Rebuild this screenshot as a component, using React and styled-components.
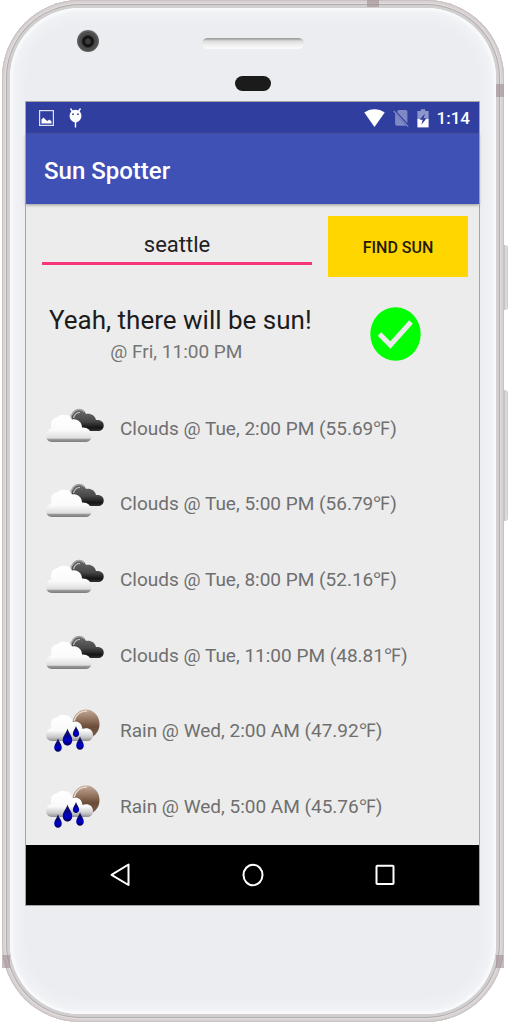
import React, { useState } from "react";
import styled, { createGlobalStyle } from "styled-components";

const GlobalStyle = createGlobalStyle`
  *, *::before, *::after { box-sizing: border-box; }
  body { margin: 0; background: #fff; font-family: Roboto, "Liberation Sans", sans-serif; }
  button, input { font: inherit; }
`;

/* ---------- device ---------- */

const Phone = styled.div`
  position: relative;
  margin: 0 4px 0 2px;
  padding: 8px;
  border-radius: 78px;
  background: #d2cfd0;
  box-shadow:
    inset 0 0 0 1px #c9c2c2,
    inset 0 0 0 3px #d8d2d2,
    inset 0 0 0 4px #e2dddd,
    inset 0 0 0 5px #b0adae;
`;

const Face = styled.div`
  padding: 0 16px 108px 15px;
  border-radius: 70px;
  background: #ecedf1;
  box-shadow: inset 0 0 4px 1px #fff, inset 0 0 16px 4px #f5f8fa;
`;

const Band = styled.span`
  position: absolute;
  background: #a08e92;
  opacity: 0.6;
  width: ${(p) => (p.$top ? "12px" : "8px")};
  height: ${(p) => (p.$top ? "7px" : "13px")};
  ${(p) => p.$place}
`;

const SideKey = styled.span`
  position: absolute;
  right: -4px;
  top: ${(p) => p.$from}px;
  width: 4px;
  height: ${(p) => p.$length}px;
  border-radius: 0 3px 3px 0;
  background: linear-gradient(90deg, #bcbaba, #e2e2e0 50%, #c9c8c7);
`;

const Forehead = styled.header`
  display: grid;
  grid-template-columns: 1fr auto 1fr;
  align-items: start;
  height: 93px;
  padding-top: 22px;
`;

const Camera = styled.span`
  width: 22px;
  height: 22px;
  margin-left: 52px;
  border-radius: 50%;
  background: radial-gradient(circle at 50% 52%, #3c3c3c 0 2px, #111 4px 5px, #4c4c4c 7px 9px, #6b6b6b 11px);
`;

const Center = styled.div`
  display: flex;
  flex-direction: column;
  align-items: center;
  gap: 27px;
  padding-top: 8px;
`;

const Speaker = styled.span`
  width: 102px;
  height: 11px;
  border-radius: 6px;
  background: linear-gradient(#9b9b9b 0, #a5a5a5 1px, #dcdcdc 3px, #f0f0f0 7px, #fbfbfb);
`;

const Sensor = styled.span`
  width: 36px;
  height: 15px;
  border-radius: 8px;
  background: #1b1b1b;
`;

/* ---------- screen ---------- */

const Screen = styled.main`
  border: 1px solid #a3a5a6;
  background: #ececec;
`;

const StatusBar = styled.div`
  display: flex;
  align-items: center;
  justify-content: space-between;
  height: 32px;
  padding: 0 9px 0 13px;
  background: #303f9f;
  color: #fff;
`;

const StatusGroup = styled.div`
  display: flex;
  align-items: center;
  gap: ${(p) => p.$gap}px;
`;

const Clock = styled.time`
  font-size: 17px;
  font-weight: 500;
  line-height: 24px;
`;

const AppBar = styled.div`
  display: flex;
  align-items: center;
  height: 70px;
  padding: 3px 18px 0;
  background: #3f51b5;
  box-shadow: 0 1px 3px #96988c;
`;

const AppTitle = styled.h1`
  margin: 0;
  color: #fff;
  font-size: 24px;
  font-weight: 500;
  line-height: 32px;
`;

const SearchForm = styled.form`
  display: flex;
  align-items: stretch;
  gap: 16px;
  padding: 12px 11px 0 16px;
`;

const CityField = styled.label`
  display: flex;
  flex: 1;
  min-width: 0;
  padding-bottom: 12px;
`;

const CityInput = styled.input`
  width: 100%;
  padding: 12px 0 0;
  border: 0;
  border-bottom: 3px solid #f8357b;
  border-radius: 0;
  outline: 0;
  background: transparent;
  color: #212121;
  font-size: 22px;
  line-height: 28px;
  text-align: center;
`;

const FindButton = styled.button`
  width: 140px;
  height: 61px;
  padding: 2px 0 0;
  border: 0;
  background: #ffd600;
  color: #1f1b06;
  font-size: 16px;
  font-weight: 500;
  line-height: 24px;
`;

const Result = styled.section`
  display: flex;
  align-items: center;
  justify-content: space-between;
  height: 114px;
  padding: 0 58px 0 23px;
`;

const Verdict = styled.h2`
  margin: 0;
  color: #1c1c1c;
  font-size: 26px;
  font-weight: 400;
  line-height: 36px;
  white-space: nowrap;
`;

const When = styled.p`
  margin: 0 8px 0 0;
  color: #757575;
  font-size: 19px;
  line-height: 28px;
  text-align: center;
`;

const Forecast = styled.ul`
  display: grid;
  grid-auto-rows: 1fr;
  min-height: 454px;
  margin: 0;
  padding: 0;
  list-style: none;
`;

const ForecastRow = styled.li`
  display: flex;
  align-items: center;
  gap: 13px;
  padding-left: 19px;
  color: #6f6f6f;
  font-size: 19px;
  line-height: 28px;
  white-space: nowrap;
`;

const NavBar = styled.nav`
  display: flex;
  align-items: center;
  justify-content: space-between;
  height: 60px;
  padding: 0 70px;
  background: #000;
`;

const NavButton = styled.button`
  display: flex;
  align-items: center;
  justify-content: center;
  width: 48px;
  height: 48px;
  padding: 0;
  border: 0;
  background: none;
`;

/* ---------- drawings ---------- */

const PictureIcon = () => (
  <svg width="15" height="16" viewBox="0 0 15 16" aria-hidden="true">
    <rect x="0.6" y="0.6" width="13.8" height="14.8" fill="none" stroke="#dfe2f3" strokeWidth="1.2" />
    <path d="M2.5 13.5V9.5L4.5 7.5L7 10L8.5 11L10.5 9.5L12.5 11.5V13.5Z" fill="#fff" />
  </svg>
);

const DroidIcon = () => (
  <svg width="13" height="20" viewBox="0 0 13 20" aria-hidden="true">
    <path d="M1.5 0.5L3.5 3.5M11.5 0.5L9.5 3.5M6.5 12V19.5" stroke="#fff" strokeWidth="1.4" />
    <path d="M6.5 1.8C10 1.8 12.4 4.6 12.4 8C12.4 11.2 10 14 6.5 14.6C3 14 0.6 11.2 0.6 8C0.6 4.6 3 1.8 6.5 1.8Z" fill="#fff" />
    <circle cx="4" cy="6.2" r="0.9" fill="#303f9f" />
    <circle cx="9" cy="6.2" r="0.9" fill="#303f9f" />
  </svg>
);

const WifiIcon = () => (
  <svg width="21" height="18" viewBox="0 0 21 18" aria-hidden="true">
    <path d="M0.3 3.6C6 -1 15 -1 20.7 3.6L10.5 18Z" fill="#fff" />
  </svg>
);

const NoSimIcon = () => (
  <svg width="16" height="18" viewBox="0 0 16 18" aria-hidden="true">
    <path d="M5.3 1H13.2L14.4 2.2V14.3L4 3ZM2.1 4.2L13.3 16.8H3.4L2.1 15.6Z" fill="#7e88c4" />
    <path d="M0.8 2L15.2 17.6" stroke="#7e88c4" strokeWidth="1.3" />
  </svg>
);

const BatteryIcon = () => (
  <svg width="12" height="19" viewBox="0 0 12 19" aria-hidden="true">
    <path d="M3.8 0.3H8.2V2H11.6V10H0.4V2H3.8Z" fill="#8e97cb" />
    <path d="M0.4 10H11.6V18.4H0.4Z" fill="#fff" />
    <path d="M8 4.5L2.6 10.8H5.6L4.4 15.8L9.6 9.3H6.6Z" fill="#303f9f" />
  </svg>
);

const CheckIcon = () => (
  <svg width="51" height="54" viewBox="0 0 51 54" role="img" aria-label="Sunny">
    <ellipse cx="25.5" cy="27" rx="25.2" ry="26.8" fill="#00ff00" />
    <path d="M9.5 27L20.4 38L41 15" fill="none" stroke="#ececec" strokeWidth="5" />
  </svg>
);

const CloudsIcon = () => (
  <svg width="62" height="50" viewBox="0 0 62 50" role="img" aria-label="Clouds">
    <defs>
      <linearGradient id="cloudDark" x1="0" y1="0" x2="0" y2="1">
        <stop offset="0" stopColor="#6c6c6c" />
        <stop offset="0.55" stopColor="#484848" />
        <stop offset="0.85" stopColor="#151515" />
        <stop offset="1" stopColor="#333" />
      </linearGradient>
      <linearGradient id="cloudLight" x1="0" y1="0" x2="0" y2="1">
        <stop offset="0" stopColor="#fff" />
        <stop offset="0.55" stopColor="#fbfbfb" />
        <stop offset="0.86" stopColor="#dedede" />
        <stop offset="0.9" stopColor="#9a9a9a" />
        <stop offset="1" stopColor="#7c7c7c" />
      </linearGradient>
    </defs>
    <path d="M26 19C25 10 29 5 34 5C38 5 40 7.5 41 10C45 9 50 11 51 16C56 15.5 59 18 58.7 22C58.5 25 56 27 53 27H35Z" fill="url(#cloudDark)" />
    <path d="M25.500 15.500C26 9 30.500 5 35 5.500C37 5.700 38.500 6.500 39.500 8" fill="none" stroke="#a9a9a9" strokeWidth="1.500" />
    <path d="M28.500 14C29.500 10.500 32 8.500 35 8.500" fill="none" stroke="#c4c4c4" strokeWidth="1.200" />
    <path d="M7 38C3.5 38 1 35 1 32C1 28 3.500 25 6.500 24.500C5 19 7 13.500 12 13.500C14 11 17 10.500 20 11C24 11 26 13 27 15.500C32 14 37 18 37 23.500C42 23 46 26 46.500 31C47 35 44.500 38 41 38Z" fill="url(#cloudLight)" />
  </svg>
);

const Drop = ({ x, y, s }) => (
  <path
    transform={`translate(${x} ${y}) scale(${s})`}
    d="M0 -8C1 -4 4.5 -1 4.5 3C4.5 6 2.5 8 0 8C-2.5 8 -4.5 6 -4.5 3C-4.5 -1 -1 -4 0 -8Z"
    fill="url(#dropBlue)"
  />
);

const RainIcon = () => (
  <svg width="62" height="50" viewBox="0 0 62 50" role="img" aria-label="Rain">
    <defs>
      <linearGradient id="moonBrown" x1="0" y1="0" x2="0" y2="1">
        <stop offset="0" stopColor="#c5ab9a" />
        <stop offset="0.4" stopColor="#8a6c57" />
        <stop offset="0.6" stopColor="#694d39" />
        <stop offset="1" stopColor="#7c604c" />
      </linearGradient>
      <linearGradient id="rainCloud" x1="0" y1="0" x2="0" y2="1">
        <stop offset="0" stopColor="#fff" />
        <stop offset="0.6" stopColor="#fafafa" />
        <stop offset="0.85" stopColor="#c9c9c9" />
        <stop offset="1" stopColor="#8f8f8f" />
      </linearGradient>
      <linearGradient id="dropBlue" x1="0" y1="0" x2="0" y2="1">
        <stop offset="0" stopColor="#1a1a55" />
        <stop offset="0.4" stopColor="#06067c" />
        <stop offset="0.7" stopColor="#0000d0" />
        <stop offset="1" stopColor="#00004e" />
      </linearGradient>
    </defs>
    <ellipse cx="41" cy="18" rx="13.500" ry="14.500" fill="url(#moonBrown)" />
    <path d="M29 15C31 8 36 5 42 5" fill="none" stroke="#ead9cc" strokeWidth="1.5" />
    <path d="M7 35C3.500 35 1 32 1 29C1 25 3.500 22.500 6.500 22C5 16 7 11.500 12 11.500C14 9 17 8.500 19 9C23.500 9 26.500 12 27.500 16C32 14 37 17 37.500 23C43 21 48 24 48 29C48 33 45 35 42 35Z" fill="url(#rainCloud)" />
    <Drop x={22.5} y={31} s={1.05} />
    <Drop x={13} y={39} s={0.85} />
    <Drop x={31} y={25.5} s={0.7} />
    <Drop x={35} y={37} s={0.85} />
  </svg>
);

const BackIcon = () => (
  <svg width="20" height="24" viewBox="0 0 20 24" aria-hidden="true">
    <path d="M18.5 1.5V22L1.5 11.8Z" fill="none" stroke="#fff" strokeWidth="2" strokeLinejoin="round" />
  </svg>
);

const HomeIcon = () => (
  <svg width="22" height="24" viewBox="0 0 22 24" aria-hidden="true">
    <ellipse cx="11" cy="12" rx="9.5" ry="10.3" fill="none" stroke="#fff" strokeWidth="2" />
  </svg>
);

const RecentIcon = () => (
  <svg width="20" height="22" viewBox="0 0 20 22" aria-hidden="true">
    <rect x="1.5" y="1.8" width="17" height="18.2" rx="0.8" fill="none" stroke="#fff" strokeWidth="2" />
  </svg>
);

/* ---------- page ---------- */

const forecast = [
  { sky: "Clouds", time: "Tue, 2:00 PM", temp: "55.69" },
  { sky: "Clouds", time: "Tue, 5:00 PM", temp: "56.79" },
  { sky: "Clouds", time: "Tue, 8:00 PM", temp: "52.16" },
  { sky: "Clouds", time: "Tue, 11:00 PM", temp: "48.81" },
  { sky: "Rain", time: "Wed, 2:00 AM", temp: "47.92" },
  { sky: "Rain", time: "Wed, 5:00 AM", temp: "45.76" },
];

export default function App() {
  const [city, setCity] = useState("seattle");

  return (
    <>
      <GlobalStyle />
      <Phone>
        <SideKey $from={245} $length={65} />
        <SideKey $from={390} $length={131} />
        <Face>
          <Forehead>
            <Camera />
            <Center>
              <Speaker />
              <Sensor />
            </Center>
          </Forehead>
          <Screen>
            <StatusBar>
              <StatusGroup $gap={15}>
                <PictureIcon />
                <DroidIcon />
              </StatusGroup>
              <StatusGroup $gap={8}>
                <WifiIcon />
                <NoSimIcon />
                <BatteryIcon />
                <Clock>1:14</Clock>
              </StatusGroup>
            </StatusBar>
            <AppBar>
              <AppTitle>Sun Spotter</AppTitle>
            </AppBar>
            <SearchForm onSubmit={(e) => e.preventDefault()}>
              <CityField>
                <CityInput
                  aria-label="City"
                  value={city}
                  onChange={(e) => setCity(e.target.value)}
                />
              </CityField>
              <FindButton type="submit">FIND SUN</FindButton>
            </SearchForm>
            <Result>
              <div>
                <Verdict>Yeah, there will be sun!</Verdict>
                <When>@ Fri, 11:00 PM</When>
              </div>
              <CheckIcon />
            </Result>
            <Forecast>
              {forecast.map((f) => (
                <ForecastRow key={f.time}>
                  {f.sky === "Rain" ? <RainIcon /> : <CloudsIcon />}
                  <span>{`${f.sky} @ ${f.time} (${f.temp}℉)`}</span>
                </ForecastRow>
              ))}
            </Forecast>
            <NavBar>
              <NavButton aria-label="Back"><BackIcon /></NavButton>
              <NavButton aria-label="Home"><HomeIcon /></NavButton>
              <NavButton aria-label="Recent apps"><RecentIcon /></NavButton>
            </NavBar>
          </Screen>
        </Face>
        <Band $top $place="top: 0; left: 365px;" />
        <Band $place="top: 84px; right: 0;" />
        <Band $place="bottom: 54px; left: 0;" />
        <Band $place="bottom: 54px; right: 0;" />
      </Phone>
    </>
  );
}
